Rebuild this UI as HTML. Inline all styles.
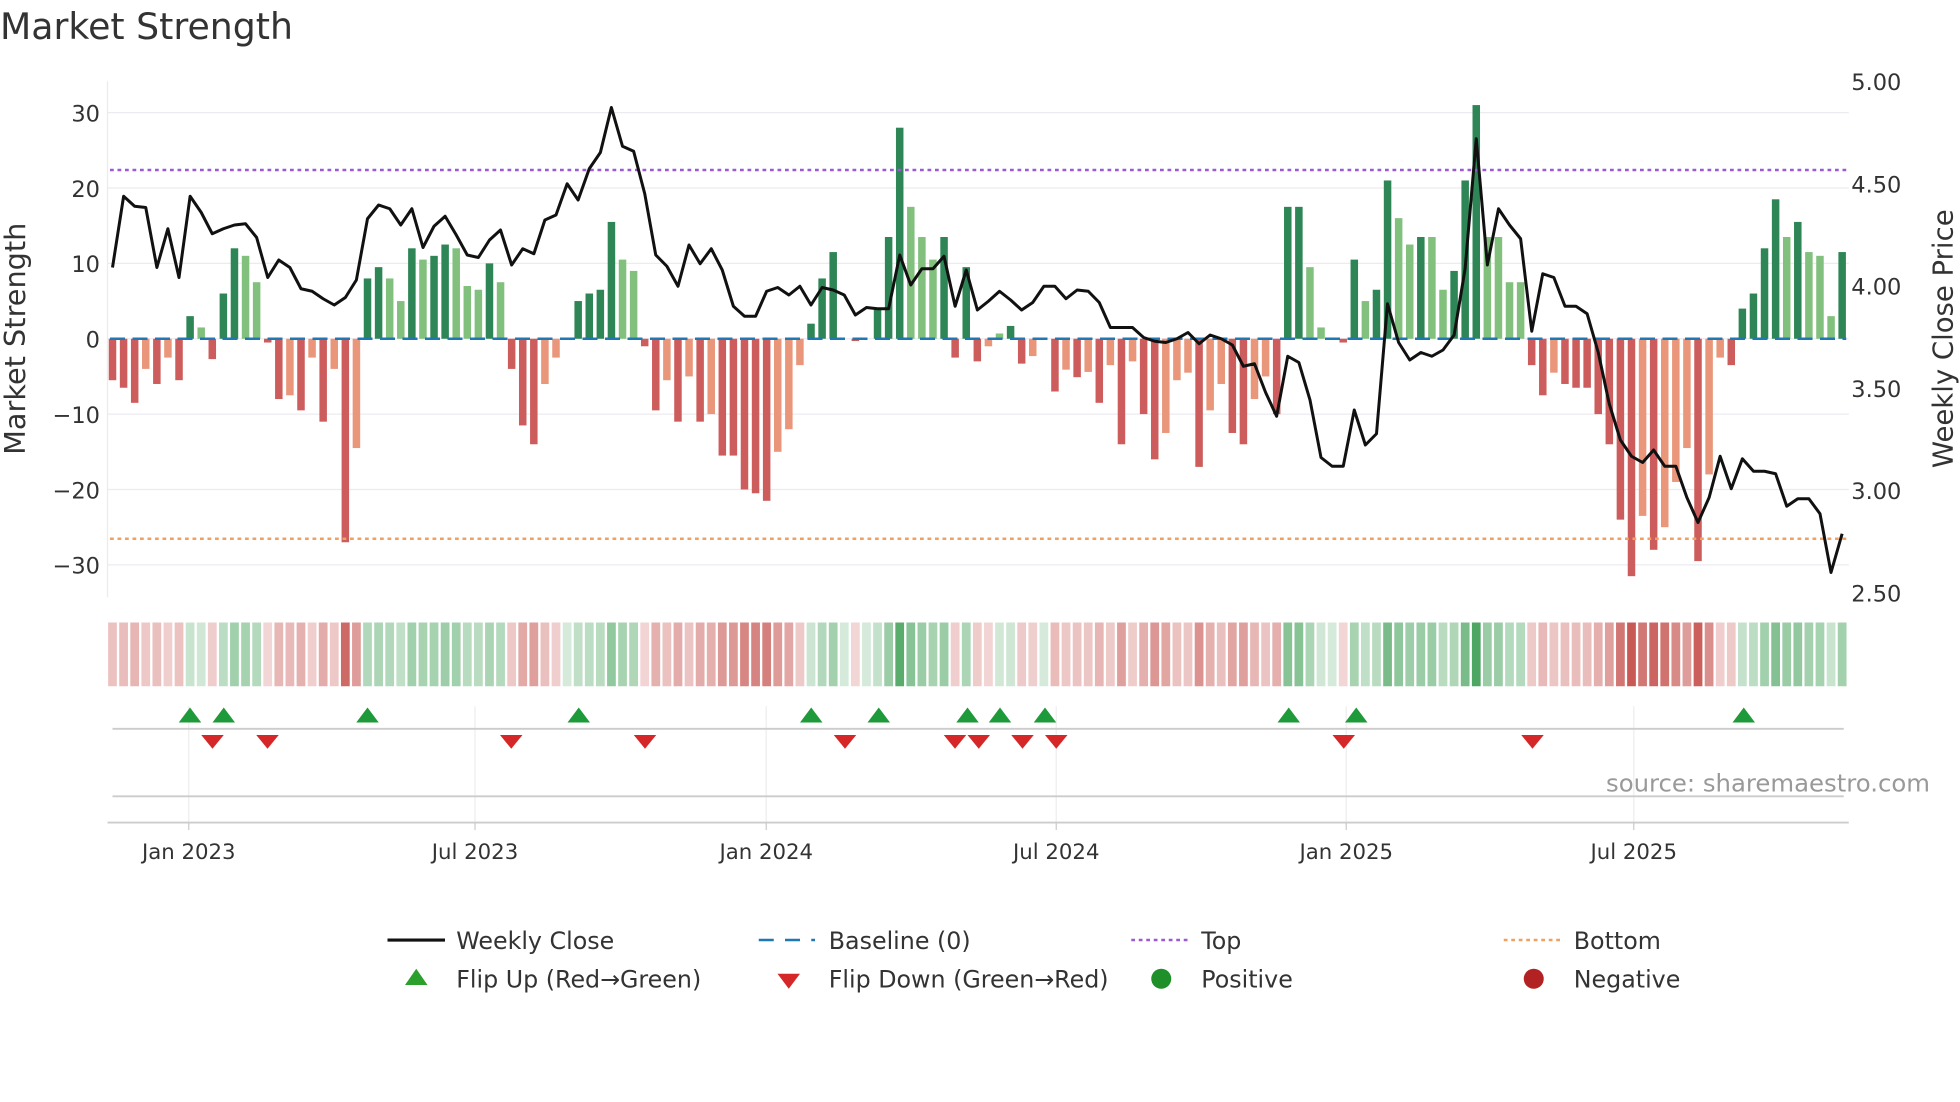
<!DOCTYPE html>
<html><head><meta charset="utf-8"><style>
html,body{margin:0;padding:0;background:#fff;}
svg{display:block;font-family:"DejaVu Sans","Liberation Sans",sans-serif;}
</style></head><body>
<svg id="s" width="1960" height="1102" viewBox="0 0 1568 881.6" xmlns="http://www.w3.org/2000/svg">
<rect width="1568" height="881.6" fill="#fff"/>
<text x="0" y="31" font-size="29" fill="#333">Market Strength</text>
<g id="grid"></g>
<g id="bars"></g>
<g id="heat"></g>
<g id="fg"></g>
<text x="1544" y="633" font-size="19.5" fill="#999" text-anchor="end">source: sharemaestro.com</text>
<text transform="translate(20,271) rotate(-90)" font-size="23" fill="#333" text-anchor="middle">Market Strength</text>
<text transform="translate(1562,271) rotate(-90)" font-size="22" fill="#333" text-anchor="middle">Weekly Close Price</text>
<g font-size="19" fill="#333">
<line x1="310" y1="752" x2="356" y2="752" stroke="#111" stroke-width="2.5"/><text x="365" y="759">Weekly Close</text>
<line x1="607" y1="752" x2="652" y2="752" stroke="#1f77b4" stroke-width="2" stroke-dasharray="12 9"/><text x="663" y="759">Baseline (0)</text>
<line x1="905" y1="752" x2="950" y2="752" stroke="#9b59d6" stroke-width="2" stroke-dasharray="3 3"/><text x="961" y="759">Top</text>
<line x1="1203" y1="752" x2="1248" y2="752" stroke="#f0a060" stroke-width="2" stroke-dasharray="3 3"/><text x="1259" y="759">Bottom</text>
<polygon points="324,788 342,788 333,775" fill="#2ca02c"/><text x="365" y="790">Flip Up (Red→Green)</text>
<polygon points="622,779 640,779 631,791" fill="#d62728"/><text x="663" y="790">Flip Down (Green→Red)</text>
<circle cx="929" cy="783" r="8" fill="#1f8f2a"/><text x="961" y="790">Positive</text>
<circle cx="1227" cy="783" r="8" fill="#b22222"/><text x="1259" y="790">Negative</text>
</g>
</svg>
<script>
var NS="http://www.w3.org/2000/svg";
function el(p,t,a,txt){var e=document.createElementNS(NS,t);for(var k in a)e.setAttribute(k,a[k]);if(txt!=null)e.textContent=txt;document.getElementById(p).appendChild(e);return e;}
var V=[[-5.5,'r'],[-6.5,'r'],[-8.5,'r'],[-4,'s'],[-6,'r'],[-2.5,'s'],[-5.5,'r'],[3,'d'],[1.5,'l'],[-2.7,'r'],
[6,'d'],[12,'d'],[11,'l'],[7.5,'l'],[-0.5,'r'],[-8,'r'],[-7.5,'s'],[-9.5,'r'],[-2.5,'s'],[-11,'r'],
[-4,'s'],[-27,'r'],[-14.5,'s'],[8,'d'],[9.5,'d'],[8,'l'],[5,'l'],[12,'d'],[10.5,'l'],[11,'d'],
[12.5,'d'],[12,'l'],[7,'l'],[6.5,'l'],[10,'d'],[7.5,'l'],[-4,'r'],[-11.5,'r'],[-14,'r'],[-6,'s'],
[-2.5,'s'],[0,'d'],[5,'d'],[6,'d'],[6.5,'d'],[15.5,'d'],[10.5,'l'],[9,'l'],[-1,'r'],[-9.5,'r'],
[-5.5,'s'],[-11,'r'],[-5,'s'],[-11,'r'],[-10,'s'],[-15.5,'r'],[-15.5,'r'],[-20,'r'],[-20.5,'r'],[-21.5,'r'],
[-15,'s'],[-12,'s'],[-3.5,'s'],[2,'d'],[8,'d'],[11.5,'d'],[0,'d'],[-0.3,'r'],[0,'d'],[4,'d'],
[13.5,'d'],[28,'d'],[17.5,'l'],[13.5,'l'],[10.5,'l'],[13.5,'d'],[-2.5,'r'],[9.5,'d'],[-3,'r'],[-1,'s'],
[0.7,'l'],[1.7,'d'],[-3.3,'r'],[-2.3,'s'],[0,'d'],[-7,'r'],[-4.1,'s'],[-5.1,'r'],[-4.4,'s'],[-8.5,'r'],
[-3.5,'s'],[-14,'r'],[-3,'s'],[-10,'r'],[-16,'r'],[-12.5,'s'],[-5.5,'s'],[-4.5,'s'],[-17,'r'],[-9.5,'s'],
[-6,'s'],[-12.5,'r'],[-14,'r'],[-8,'s'],[-5,'s'],[-10,'r'],[17.5,'d'],[17.5,'d'],[9.5,'l'],[1.5,'l'],
[0,'d'],[-0.5,'r'],[10.5,'d'],[5,'l'],[6.5,'d'],[21,'d'],[16,'l'],[12.5,'l'],[13.5,'d'],[13.5,'l'],
[6.5,'l'],[9,'d'],[21,'d'],[31,'d'],[13.5,'l'],[13.5,'l'],[7.5,'l'],[7.5,'l'],[-3.5,'r'],[-7.5,'r'],
[-4.5,'s'],[-6,'r'],[-6.5,'r'],[-6.5,'r'],[-10,'r'],[-14,'r'],[-24,'r'],[-31.5,'r'],[-23.5,'s'],[-28,'r'],
[-25,'s'],[-19,'s'],[-14.5,'s'],[-29.5,'r'],[-18,'s'],[-2.5,'s'],[-3.5,'r'],[4,'d'],[6,'d'],[12,'d'],
[18.5,'d'],[13.5,'l'],[15.5,'d'],[11.5,'l'],[11,'l'],[3,'l'],[11.5,'d']];
var C={d:'#2e8555',l:'#82c07e',r:'#cd5c5c',s:'#e9967a'};
function X(i){return 90+i*8.87;}
function Y(v){return 271-v*6.03;}
[30,20,10,0,-10,-20,-30].forEach(function(v){el('grid','line',{x1:86,x2:1479,y1:Y(v),y2:Y(v),stroke:'#ececf0','stroke-width':1});
el('grid','text',{x:80,y:Y(v)+7,'font-size':18,fill:'#333','text-anchor':'end'},(v<0?'\u2212'+(-v):''+v));});
el('grid','line',{x1:86,x2:86,y1:65,y2:478,stroke:'#ececf0'});
[[5,'5.00'],[4.5,'4.50'],[4,'4.00'],[3.5,'3.50'],[3,'3.00'],[2.5,'2.50']].forEach(function(p){var y=65+(5-p[0])*163.6;
el('grid','text',{x:1481,y:y+7,'font-size':18,fill:'#333'},p[1]);});
V.forEach(function(b,i){var v=b[0];if(Math.abs(v)<0.05)return;var y1=Y(Math.max(v,0)),y2=Y(Math.min(v,0));
el('bars','rect',{x:X(i)-3,y:y1,width:6,height:y2-y1,fill:C[b[1]]});});
el('fg','line',{x1:88,x2:1477,y1:271,y2:271,stroke:'#1f77b4','stroke-width':2,'stroke-dasharray':'12 6'});
el('fg','line',{x1:88,x2:1477,y1:136,y2:136,stroke:'#9b59d6','stroke-width':2,'stroke-dasharray':'3 3'});
el('fg','line',{x1:88,x2:1477,y1:431,y2:431,stroke:'#f0a060','stroke-width':2,'stroke-dasharray':'3 3'});
var P=[214,157,165,166,214,183,222,157,170,187,183,180,179,190,222,208,214,231,233,239,244,238,224,175,164,167,180,167,198,181,173,188,204,206,192,184,212,199,203,176,172,147,160,135,122,86,117,121,155,204,213,229,196,211,199,216,245,253,253,233,230,236,229,244,230,232,236,252,246,247,247,204,228,215,215,205,245,216,248,241,233,240,248,242,229,229,239,232,233,242,262,262,262,270,273,274,271,266,275,268,271,276,293,291,314,333,285,290,320,366,373,373,328,356,347,243,274,288,282,285,280,268,215,111,212,167,180,191,265,219,222,245,245,251,282,323,352,365,370,360,373,373,398,418,398,365,391,367,377,377,379,405,399,399,411,458,427];
el('fg','polyline',{points:P.map(function(y,i){return X(i).toFixed(1)+','+y;}).join(' '),fill:'none',stroke:'#111','stroke-width':2.4,'stroke-linejoin':'round'});
V.forEach(function(b,i){var v=b[0],a=0.2+0.65*Math.min(Math.abs(v),31)/31;var c=v>=0?'rgba(46,150,70,'+a+')':'rgba(190,60,55,'+a+')';
el('heat','rect',{x:X(i)-3.5,y:498,width:7,height:51,fill:c});});
var dates=[[151,'Jan 2023'],[380,'Jul 2023'],[613,'Jan 2024'],[845,'Jul 2024'],[1077,'Jan 2025'],[1307,'Jul 2025']];
dates.forEach(function(d){el('grid','line',{x1:d[0],x2:d[0],y1:565,y2:660,stroke:'#eeeeee'});
el('fg','line',{x1:d[0],x2:d[0],y1:658,y2:664,stroke:'#ccc'});
el('fg','text',{x:d[0],y:687,'font-size':17,fill:'#333','text-anchor':'middle'},d[1]);});
el('fg','line',{x1:90,x2:1475,y1:583,y2:583,stroke:'#ccc','stroke-width':1.5});
el('fg','line',{x1:90,x2:1475,y1:637,y2:637,stroke:'#ccc','stroke-width':1.5});
el('fg','line',{x1:86,x2:1479,y1:658,y2:658,stroke:'#ccc','stroke-width':1.5});
[152,179,294,463,649,703,774,800,836,1031,1085,1395].forEach(function(x){el('fg','polygon',{points:(x-9)+',578 '+(x+9)+',578 '+x+',566',fill:'#1f9a3a'});});
[170,214,409,516,676,764,783,818,845,1075,1226].forEach(function(x){el('fg','polygon',{points:(x-9)+',588 '+(x+9)+',588 '+x+',599',fill:'#d62728'});});
</script>
</body></html>
